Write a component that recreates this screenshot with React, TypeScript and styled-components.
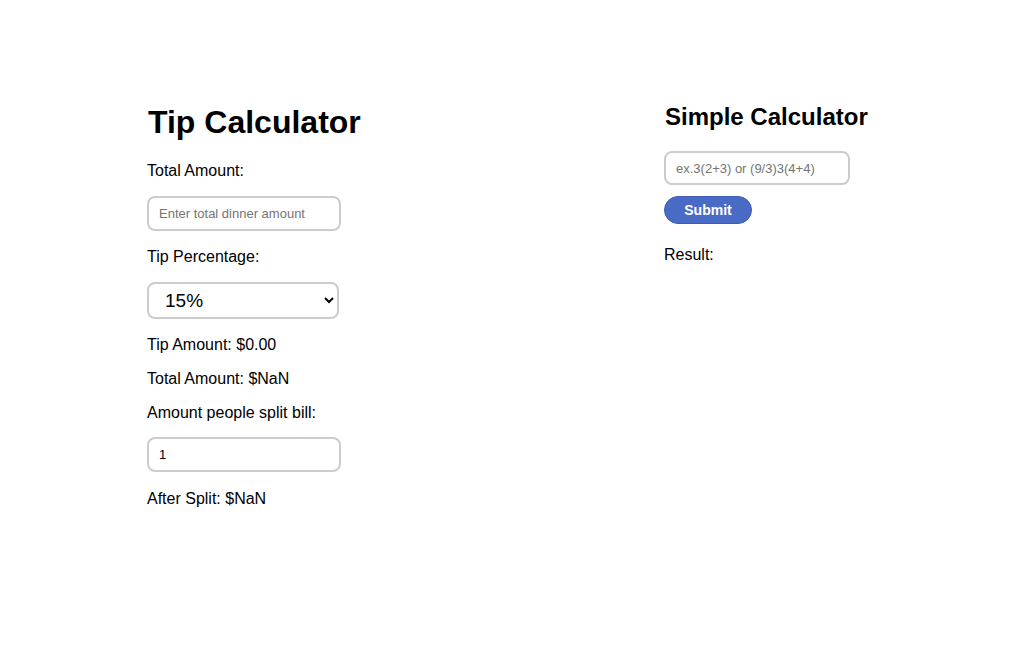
import React from "react";
import styled, { createGlobalStyle } from "styled-components";

const GlobalStyle = createGlobalStyle`
  body {
    margin: 0;
    background: #ffffff;
    font-family: "Liberation Sans", Arial, sans-serif;
    color: #000000;
  }
`;

const Page = styled.div`
  display: grid;
  grid-template-columns: 517px auto;
  padding: 102px 0 0 147px;
`;

const Column = styled.div`
  display: flex;
  flex-direction: column;
  align-items: flex-start;
`;

const RightColumn = styled(Column)`
  padding-top: 1px;
`;

const Title = styled.h1`
  margin: 0 0 19px 1px;
  padding-top: 2px;
  font-size: 32px;
  font-weight: 700;
  line-height: normal;
`;

const SubTitle = styled.h2`
  margin: 0 0 20px 1px;
  font-size: 24px;
  font-weight: 700;
  line-height: normal;
`;

const Label = styled.p<{ $after?: number }>`
  margin: 0 0 ${(p) => p.$after ?? 14}px 0;
  padding-top: 2px;
  font-size: 16px;
  line-height: normal;
`;

const TextInput = styled.input<{ $width: number; $height?: number; $after?: number }>`
  box-sizing: border-box;
  width: ${(p) => p.$width}px;
  height: ${(p) => p.$height ?? 35}px;
  margin: 0 0 ${(p) => p.$after ?? 15}px 0;
  padding: 0 10px;
  border: 2px solid #cccccc;
  border-radius: 8px;
  font-family: "Liberation Sans", Arial, sans-serif;
  font-size: 13px;
  color: #000000;
  outline: none;

  &::placeholder {
    color: #757575;
  }
`;

const Select = styled.select`
  box-sizing: border-box;
  width: 192px;
  height: 37px;
  margin: 0 0 15px 0;
  padding: 0 8px 0 12px;
  border: 2px solid #cccccc;
  border-radius: 8px;
  background: #ffffff;
  font-family: "Liberation Sans", Arial, sans-serif;
  font-size: 19px;
  color: #000000;
  outline: none;
`;

const SubmitButton = styled.button`
  box-sizing: border-box;
  width: 88px;
  height: 28px;
  margin: 0 0 20px 0;
  padding: 0;
  border: 1px solid #3d5cb8;
  border-radius: 14px;
  background: #4a6bc5;
  color: #ffffff;
  font-family: "Liberation Sans", Arial, sans-serif;
  font-size: 14px;
  font-weight: 700;
  cursor: pointer;
`;

const App: React.FC = () => {
  return (
    <>
      <GlobalStyle />
      <Page>
        <Column>
          <Title>Tip Calculator</Title>
          <Label $after={16}>Total Amount:</Label>
          <TextInput $width={194} placeholder="Enter total dinner amount" />
          <Label $after={16}>Tip Percentage:</Label>
          <Select defaultValue="15">
            <option value="10">10%</option>
            <option value="15">15%</option>
            <option value="20">20%</option>
          </Select>
          <Label>Tip Amount: $0.00</Label>
          <Label>Total Amount: $NaN</Label>
          <Label $after={15}>Amount people split bill:</Label>
          <TextInput $width={194} type="number" defaultValue={1} $after={16} />
          <Label>After Split: $NaN</Label>
        </Column>
        <RightColumn>
          <SubTitle>Simple Calculator</SubTitle>
          <TextInput $width={186} $height={34} $after={11} placeholder="ex.3(2+3) or (9/3)3(4+4)" />
          <SubmitButton>Submit</SubmitButton>
          <Label>Result:</Label>
        </RightColumn>
      </Page>
    </>
  );
};

export default App;
